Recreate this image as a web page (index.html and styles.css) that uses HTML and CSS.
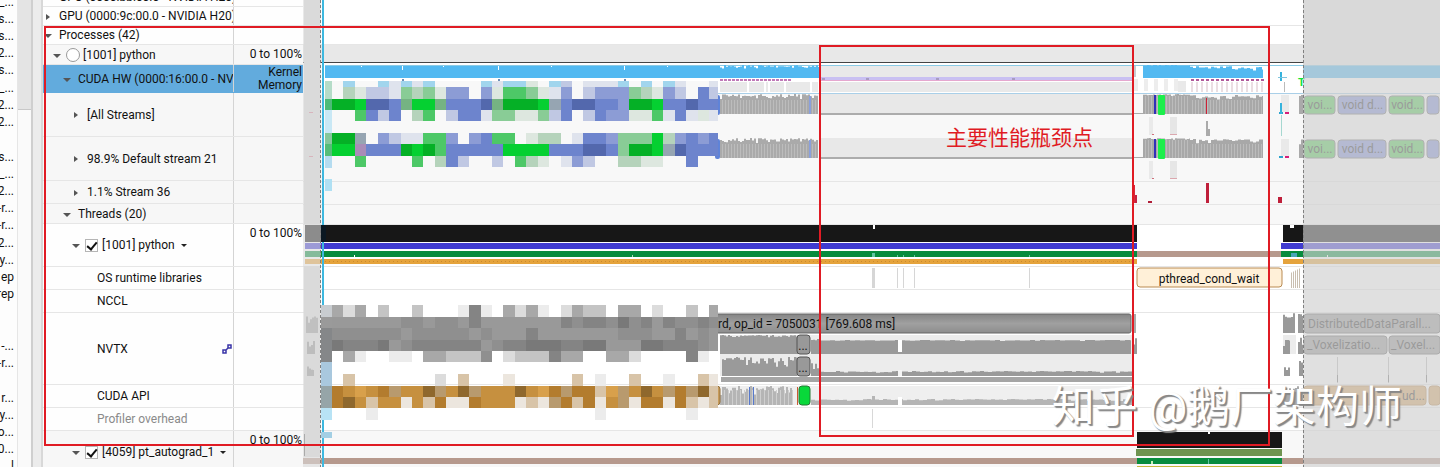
FILE: index.html
```html
<!DOCTYPE html>
<html lang="en">
<head>
<meta charset="utf-8">
<title>Profiler timeline</title>
<link rel="stylesheet" href="styles.css">
</head>
<body>
<main class="app">
  <aside class="files">
    <ul class="file-list">
      <li>_...</li><li>s...</li><li>s...</li><li>2...</li><li>s...</li><li>_...</li><li>2...</li><li>2...</li><li></li>
      <li>s...</li><li>_...</li><li>2...</li><li>-r...</li><li>-r...</li><li>2...</li><li>y...</li><li>ep</li><li>rep</li>
      <li></li><li></li><li>-...</li><li>-r...</li><li></li><li>r...</li><li>y...</li><li>o...</li><li>0...</li><li>l</li>
    </ul>
    <div class="scrollbar"><div class="thumb"></div></div>
    <div class="splitter"></div>
  </aside>

  <section class="tree">
    <div class="row row-cut"><div class="name l0"><button class="tw shut" aria-label="Expand"></button><span>GPU (0000:bb:00.0 - NVIDIA H20)</span></div><div class="scale"></div></div>
    <div class="row row-s"><div class="name l0"><button class="tw shut" aria-label="Expand"></button><span>GPU (0000:9c:00.0 - NVIDIA H20)</span></div><div class="scale"></div></div>
    <div class="row row-s"><div class="name l0"><button class="tw" aria-label="Collapse"></button><span>Processes (42)</span></div><div class="scale"></div></div>
    <div class="row row-p alt"><div class="name l1"><button class="tw" aria-label="Collapse"></button><input class="dot" type="radio" id="p1001"><label for="p1001">[1001] python</label></div><div class="scale mid">0 to 100%</div></div>
    <div class="row row-c picked"><div class="name l2"><button class="tw" aria-label="Collapse"></button><span>CUDA HW (0000:16:00.0 - NVIDIA)</span></div><div class="scale mid">Kernel<br>Memory</div></div>
    <div class="row row-l alt"><div class="name l3"><button class="tw shut" aria-label="Expand"></button><span>[All Streams]</span></div><div class="scale"></div></div>
    <div class="row row-l alt"><div class="name l3"><button class="tw shut" aria-label="Expand"></button><span>98.9% Default stream 21</span></div><div class="scale"></div></div>
    <div class="row row-m alt"><div class="name l3"><button class="tw shut" aria-label="Expand"></button><span>1.1% Stream 36</span></div><div class="scale"></div></div>
    <div class="row row-p alt"><div class="name l2"><button class="tw" aria-label="Collapse"></button><span>Threads (20)</span></div><div class="scale"></div></div>
    <div class="row row-t"><div class="name l3"><button class="tw" aria-label="Collapse"></button><input class="tick" type="checkbox" id="t1001" checked><label for="t1001">[1001] python</label><button class="drop" aria-label="Menu"></button></div><div class="scale">0 to 100%</div></div>
    <div class="row row-m"><div class="name l4"><span>OS runtime libraries</span></div><div class="scale"></div></div>
    <div class="row row-m"><div class="name l4"><span>NCCL</span></div><div class="scale"></div></div>
    <div class="row row-n"><div class="name l4"><span>NVTX</span>
      <svg class="link" width="10" height="10" viewBox="0 0 10 10"><path d="M1 6h3v3H1zM6 1h3v3H6zM4 6l2-2" fill="none" stroke="#3a35a8" stroke-width="1.5"/></svg></div><div class="scale"></div></div>
    <div class="row row-m"><div class="name l4"><span>CUDA API</span></div><div class="scale"></div></div>
    <div class="row row-m"><div class="name l4 faint"><span>Profiler overhead</span></div><div class="scale"></div></div>
    <div class="row row-t alt"><div class="name l3"><button class="tw" aria-label="Collapse"></button><input class="tick" type="checkbox" id="t4059" checked><label for="t4059">[4059] pt_autograd_1</label><button class="drop" aria-label="Menu"></button></div><div class="scale">0 to 100%</div></div>
  </section>

  <svg class="timeline" id="timeline" viewBox="303 0 1137 467" preserveAspectRatio="xMinYMin slice"></svg>

  <div class="frame"></div>
  <div class="watermark">知乎 @鹅厂架构师</div>
</main>
<script src="timeline.js"></script>
</body>
</html>
```

FILE: styles.css
```css
* { box-sizing: border-box; }
body {
  margin: 0;
  background: #fff;
  color: #111;
  font: 12px/14px Roboto, "Noto Sans CJK SC", sans-serif;
}
.app { position: relative; display: flex; height: 100vh; overflow: hidden; }

.files { display: flex; flex: none; width: 43px; overflow: hidden; background: #fdfdfd; }
.file-list {
  display: grid;
  grid-auto-rows: 1fr;
  flex: none;
  width: 18px;
  height: calc(100% + 15px);
  margin: -7px 0 0;
  padding: 0 3px 0 0;
  list-style: none;
  border-right: 1px solid #e6e6e6;
}
.file-list li { display: flex; justify-content: flex-end; align-items: center; min-width: 0; white-space: nowrap; }
.scrollbar { width: 13px; background: #fafafa; }
.thumb { height: 110px; background: #e4e4e4; border-bottom: 1px solid #c8c8c8; }
.splitter { flex: 1; background: #ececec; border-left: 2px solid #cfcfcf; border-right: 2px solid #d8d8d8; }

.tree { flex: none; width: 260px; background: #fff; }
.row { display: flex; border-bottom: 1px solid #e6e6e6; background: #fefefe; }
.row.alt { background: #f7f7f7; }
.row.picked { background: #62abdd; border-color: #62abdd; }
.row-cut { height: 20px; margin-top: -13px; }
.row-s { height: 19px; }
.row-p { height: 20px; }
.row-m { height: 23px; }
.row-c { height: 28px; }
.row-t { height: 43px; }
.row-l { height: 44px; }
.row-n { height: 72px; }
.name {
  display: flex;
  align-items: center;
  width: 191px;
  overflow: hidden;
  white-space: nowrap;
  border-right: 1px solid #d4d4d4;
}
.l0 { padding-left: 1px; }
.l1 { padding-left: 10px; }
.l2 { padding-left: 20px; }
.l3 { padding-left: 29px; }
.l4 { padding-left: 54px; }
.faint { color: #8a8a8a; }
.scale { flex: 1; padding: 3px 1px 0 0; text-align: right; line-height: 13px; }
.scale.mid { align-self: center; padding-top: 0; }

button { padding: 0; border: 0; background: none; }
.tw { position: relative; flex: none; width: 8px; height: 8px; margin-right: 7px; }
.tw::before { content: ""; display: block; margin-top: 2px; border: 4px solid transparent; border-top-color: #555; border-bottom: 0; }
.tw.shut::before { width: 4px; margin: 1px 0 0 2px; border: 3px solid transparent; border-left: 4px solid #555; border-right: 0; }
.dot { appearance: none; flex: none; width: 14px; height: 14px; margin: 0 3px 0 -2px; border: 1px solid #999; border-radius: 50%; background: #fff; }
.tick { appearance: none; flex: none; display: grid; place-items: center; width: 13px; height: 13px; margin: 0 4px 0 -2px; border: 1px solid #b5b5b5; background: #fff; }
.tick::before { content: ""; width: 4px; height: 8px; border: solid #111; border-width: 0 2px 2px 0; transform: rotate(40deg); }
.drop { margin-left: 6px; border: 3px solid transparent; border-top-color: #222; border-bottom: 0; }
.link { margin-left: auto; margin-right: 1px; }

.timeline { flex: 1; min-width: 0; height: 467px; font-family: Roboto, "Noto Sans CJK SC", sans-serif; }
.frame { position: absolute; left: 44px; right: 170px; top: 26px; height: 420px; border: 2px solid #e01b24; }
.watermark {
  position: absolute;
  right: 38px;
  top: 380px;
  color: #fff;
  font-size: 43px;
  line-height: 54px;
  text-shadow: 2px 2px 1px #888, 1px 1px 1px #999;
  white-space: nowrap;
}
```

FILE: timeline.js
```js
const svg = document.getElementById("timeline");
const out = [];
const rect = (x1, y1, x2, y2, fill, extra = "") =>
  out.push(`<rect x="${x1}" y="${y1}" width="${x2 - x1}" height="${y2 - y1}" fill="${fill}" ${extra}/>`);
const text = (x, y, s, fill = "#222", size = 12, extra = "") =>
  out.push(`<text x="${x}" y="${y}" fill="${fill}" font-size="${size}" ${extra}>${s}</text>`);
const noise = n => { const v = Math.sin(n * 12.9898) * 43758.5453; return v - Math.floor(v); };

// Column chart standing on `base`; heights vary between lo and hi.
function bars(x1, x2, base, lo, hi, fill, step = 2, solid = 0) {
  let d = `M${x1} ${base}`;
  for (let x = x1; x < x2; x += step) {
    const h = lo + (hi - lo) * Math.pow(noise(x + base), 0.5);
    d += `V${(base - h).toFixed(1)}h${Math.min(step, x2 - x)}`;
  }
  out.push(`<path d="${d}V${base}z" fill="${fill}"/>`);
  if (solid) for (let x = x1 + 2; x < x2; x += 3) rect(x, base - lo, x + 1, base, "#bcbcbc");
}

// Row backgrounds
rect(303, 0, 1440, 467, "#fff");
rect(303, 44, 1440, 62, "#e8e8e8");
rect(303, 94, 1440, 224, "#f8f8f8");
rect(303, 430, 1440, 467, "#f8f8f8");
[25, 44, 181, 204, 224, 266, 289, 312, 384, 407, 430].forEach(y => rect(303, y, 1440, y + 1, "#e6e6e6"));
rect(303, 62, 1440, 63, "#444");
rect(325, 65, 1440, 66, "#8acbe6");
rect(325, 93, 1440, 94, "#a9cfe8");

// CUDA HW row
rect(325, 66, 720, 78, "#52b9f1");
[361, 443, 551, 667].forEach(x => rect(x, 66, x + 1, 67, "#fff"));
[402, 498, 624].forEach(x => { rect(x, 66, x + 1, 70, "#fff"); rect(x, 79, x + 2, 81, "#6d8fb8"); });
bars(720, 819, 78, 9, 13, "#52b9f1");
for (let x = 720; x < 792; x += 4) rect(x, 79, x + 3, 81, "#c07ab8");
rect(720, 82, 818, 92, "#e9e9e9");
[747, 764, 768, 784, 810].forEach(x => rect(x, 82, x + 2, 92, "#fff"));
rect(820, 66, 1132, 77, "#e9e9e9");
rect(820, 77, 1132, 80, "#c9c0f2");
rect(820, 80, 1132, 81, "#e5a8cf");
rect(820, 82, 1132, 92, "#e9e9e9");
[822, 866, 936, 1012].forEach(x => rect(x, 78, x + 3, 80, "#a79cc2"));
bars(1143, 1190, 78, 12, 13, "#52b9f1");
bars(1190, 1263, 78, 7, 12, "#52b9f1", 3);
rect(1134, 66, 1136, 77, "#c7cbd2");
for (let x = 1134; x < 1175; x += 10) rect(x, 79, x + 4, 91, "#ededed");
for (let x = 1191; x < 1262; x += 5) { rect(x, 79, x + 3, 81, "#b05a9a"); rect(x, 82, x + 2, 92, "#eadfe2"); }
rect(1178, 81, 1186, 92, "#e9e9e9");
rect(1280, 72, 1282, 81, "#35b3dd");
rect(1278, 77, 1287, 78, "#7fc4de");
rect(1284, 82, 1285, 92, "#bbb");
text(1298, 86, "T", "#10e33c", 11, 'font-weight="700"');
rect(1303, 66, 1440, 78, "#52b9f1");

// Stream rows
for (const base of [114, 158]) {
  rect(820, base - 20, 1132, base - 1, "#e8e8e8");
  rect(820, base - 1, 1132, base + 1, "#acacac");
  bars(720, 818, base, 14, 20, "#aaaaaa", 2, 1);
  rect(809, base - 18, 811, base, "#8aa0dc");
  rect(715, base - 19, 720, base + 1, "#5f83d8", 'rx="2"');
  rect(1132, base - 1, 1144, base, "#aaa");
  bars(1143, 1190, base, 18, 20, "#a8a8a8", 2, 1);
  bars(1190, 1263, base, 14, 19, "#a8a8a8", 3, 1);
  rect(1154, base - 19, 1156, base, "#3030b8");
  rect(1158, base - 19, 1165, base + 1, "#1cef4c", 'rx="1"');
  rect(1149, base + 3, 1153, base + 21, "#eaeaea");
  rect(1170, base + 3, 1177, base + 21, "#e6e6e6");
  rect(1170, base + 20, 1177, base + 21, "#dba7ae");
  rect(1152, base + 20, 1154, base + 21, "#d0707c");
  rect(1281, base - 19, 1289, base - 2, "#e9e9e9");
  rect(1279, base - 2, 1283, base, "#2ba4cf");
  rect(1285, base - 2, 1289, base, "#d51f7a");
  bars(1299, 1303, base, 8, 19, "#aaa", 2);
  [[1304, 1336, "#55c658", "voi..."], [1338, 1387, "#8290d6", "void d..."], [1389, 1425, "#55c658", "void..."], [1427, 1440, "#8290d6", ""]].forEach(([a, b, c, s]) => {
    rect(a, base - 18, b - 1, base, c, 'rx="3" stroke="#777"');
    text((a + b) / 2, base - 5, s, "#333", 12, 'text-anchor="middle"');
  });
}
rect(1206, 98, 1207, 114, "#cc2036");
rect(1280, 103, 1282, 114, "#35b3dd");
rect(1206, 121, 1208, 136, "#aaa");
rect(1208, 129, 1210, 136, "#aaa");
rect(1281, 115, 1282, 136, "#a6d8d1");
rect(1133, 185, 1135, 203, "#d8283c");
rect(1135, 195, 1137, 203, "#c42440");
rect(1148, 201, 1152, 203, "#b01e38");
rect(1206, 183, 1209, 203, "#bf1f3a");
rect(1278, 197, 1282, 203, "#bf1f3a");

// Thread state rows
rect(305, 225, 1137, 242, "#171717");
rect(305, 243, 1137, 249, "#403bd0");
rect(305, 251, 1137, 257, "#078c3e");
rect(305, 259, 1137, 264, "#e5a33c");
for (let x = 325; x < 1137; x += 4) rect(x, 261, x + 1, 262, "#c98a2f");
rect(1137, 251, 1282, 257, "#b6998d");
rect(873, 225, 875, 229, "#fff");
rect(354, 255, 355, 257, "#fff");
rect(632, 255, 633, 257, "#a9e0bd");
[[872, 875], [897, 898], [903, 904], [914, 915], [1029, 1030]].forEach(([a, b], i) => {
  rect(a, i ? 255 : 253, b, 257, "#62c4a3");
  rect(a, 268, b, 288, "#d6d6d6");
});
rect(1283, 225, 1440, 242, "#171717");
rect(1281, 243, 1440, 249, "#403bd0");
rect(1281, 251, 1440, 257, "#078c3e");
rect(1283, 259, 1440, 264, "#e5a33c");
rect(1290, 225, 1294, 228, "#fff");
rect(1291, 253, 1297, 257, "#4ba6b8");
rect(1327, 255, 1328, 257, "#fff");
rect(1137, 268, 1282, 287, "#fff0d8", 'rx="3" stroke="#b98b52"');
text(1209, 283, "pthread_cond_wait", "#111", 12, 'text-anchor="middle"');
for (let x = 1291; x < 1300; x += 2) rect(x, 268 + (1300 - x) / 2, x + 1, 288, "#c9beb0");

// NVTX
out.push('<linearGradient id="bar" x2="0" y2="1"><stop offset="0" stop-color="#858585"/><stop offset=".5" stop-color="#a0a0a0"/><stop offset="1" stop-color="#8d8d8d"/></linearGradient>');
rect(720, 335, 1132, 376, "#ececec");
rect(700, 314, 1131, 333, "url(#bar)", 'rx="2" stroke="#666"');
text(718, 328, "rd, op_id = 7050031 [769.608 ms]", "#111");
bars(720, 798, 354, 16, 19, "#9a9a9a");
bars(811, 820, 354, 12, 15, "#9a9a9a");
bars(820, 1131, 354, 13, 14, "#9a9a9a", 5);
bars(722, 797, 376, 8, 19, "#9a9a9a");
bars(811, 819, 376, 4, 13, "#9a9a9a");
bars(820, 1132, 376, 3, 5, "#9a9a9a", 4);
rect(898, 340, 902, 352, "#fff");
rect(898, 370, 902, 376, "#f4f4f4");
rect(721, 377, 1132, 382, "#a5a5a5");
for (const y of [335, 357]) {
  rect(797, y, 810, y + 19, "#999", 'rx="3" stroke="#555"');
  text(803, y + 15, "...", "#111", 12, 'text-anchor="middle"');
}
rect(1132, 314, 1136, 333, "#aaa");
bars(1133, 1137, 354, 8, 17, "#999");
bars(1283, 1295, 333, 12, 20, "#9a9a9a");
bars(1298, 1303, 333, 12, 20, "#9a9a9a");
rect(1283, 335, 1296, 354, "#ececec");
bars(1283, 1290, 354, 2, 16, "#999");
bars(1298, 1303, 354, 8, 18, "#999");
bars(1284, 1290, 376, 1, 10, "#999");
bars(1299, 1303, 376, 3, 16, "#999");
rect(1304, 314, 1440, 333, "#999", 'rx="3" stroke="#666"');
rect(1304, 336, 1387, 354, "#999", 'rx="3" stroke="#666"');
rect(1389, 336, 1440, 354, "#999", 'rx="3" stroke="#666"');
text(1308, 328, "DistributedDataParall...", "#333");
text(1307, 349, "_Voxelizatio...", "#333");
text(1391, 349, "_Voxel...", "#333");
[1337, 1388, 1426].forEach(x => { rect(x, 357, x + 1, 383, "#bbb"); rect(x, 375, x + 1, 382, "#777"); });

// CUDA API
rect(720, 386, 1132, 405, "#efefef");
bars(720, 793, 405, 8, 19, "#b5b5b5");
for (let x = 724; x < 793; x += 4) rect(x, 390, x + 1, 405, "#cfcfcf");
[749, 753].forEach(x => rect(x, 387, x + 1, 405, "#5779cc"));
bars(811, 1132, 405, 4, 6, "#b5b5b5", 4);
rect(898, 397, 902, 405, "#fff");
rect(872, 396, 875, 405, "#b5b5b5");
rect(797, 387, 798, 405, "#c85b33");
rect(799, 386, 810, 405, "#08d83a", 'rx="3" stroke="#277a37"');
rect(700, 386, 720, 405, "#c79b5b", 'rx="3" stroke="#93713d"');
rect(872, 409, 873, 428, "#d8d8d8");
bars(1283, 1303, 405, 5, 19, "#aaa");
rect(1304, 386, 1426, 405, "#d7a86a", 'rx="3" stroke="#b98b52"');
rect(1429, 386, 1440, 405, "#d7a86a", 'rx="3" stroke="#b98b52"');
text(1402, 400, "ud...", "#333");

// Second thread
rect(303, 458, 1440, 464, "#b6998d");
rect(1137, 432, 1282, 448, "#171717");
rect(1136, 449, 1282, 456, "#6e9350");
rect(1137, 458, 1282, 464, "#078c3e");
rect(1137, 466, 1282, 467, "#c9b73c");
rect(1208, 432, 1210, 434, "#fff");
rect(1151, 461, 1153, 464, "#c9f0b8");
rect(1208, 459, 1209, 464, "#62c4a3");

// Time before and after the selected range
rect(303, 0, 321, 467, "#dadada", 'opacity=".6"');
rect(304, 0, 320, 224, "#dadada");
rect(304, 266, 320, 457, "#dadada");
bars(306, 318, 333, 6, 18, "#c0c0c0");
bars(307, 315, 354, 3, 14, "#bdbdbd");
bars(307, 314, 376, 1, 10, "#bdbdbd");
rect(304, 434, 305, 456, "#aaa");
[112, 156].forEach(y => rect(309, y, 313, y + 1, "#d8b4bc"));
rect(1303, 0, 1440, 467, "#d0d0d0", 'opacity=".66"');
rect(1303, 0, 1440, 65, "#d9d9d9");
[320, 1303].forEach(x => out.push(`<path d="M${x}.5 0V467" stroke="#808080" stroke-dasharray="3 2"/>`));
rect(322, 0, 324, 467, "#3eb8df");
rect(321, 225, 326, 242, "#0b1822");

// Pixelated blocks
const tone = {
  a: "#a1d5ed", e: "#dfe3ed", w: "#dde7df", g: "#89cc96", G: "#4dc867", D: "#05b026", B: "#05d031",
  b: "#8c9cd5", c: "#c0c8e3", M: "#6d84cd", N: "#5368ad", l: "#b5d3bb", x: "#75b383", h: "#96a5b2", p: "#a98cb8",
  1: "#ececec", 2: "#dcdcdc", 3: "#c4c4c4", 4: "#a8a8a8", 5: "#999999", 6: "#8f8f8f", 7: "#848484", 8: "#797979",
  q: "#c6903f", r: "#b37c2e", s: "#8f682d", t: "#d8a04b", u: "#d8c4a8", v: "#ece6de", z: "#b89a6e"
};
const mosaic = [
  [81, 87, ".a..aeaea....aeaaw.ac.eeea.a.ae..e"],
  [87, 99, ".lwcceglgwbb.bwGGgweb.cbbbglwbc.Mc"],
  [99, 110, "DDBNNMxBBxMMMNxDDDBhMNNMMbDDBMMNMM"],
  [110, 121, "..GMcM.lG.cMMeggwwgcM.cMbbwwGeMewe"],
  [133, 144, "DDh.bceeGGb.bMGG.wll.eMMbgggBlbMbM"],
  [144, 156, "BBpMMMDBDGMMMMMBBBBMMMNNMgDDBhNMMM"],
  [156, 167, "..G....G.lMc..c.Glw.ebc..llww..M.."],
  [305, 317, "424.3..3...171.4241.2433.44.2..3.4"],
  [317, 328, "5555556656657555555576776867576676"],
  [328, 340, "6666665666665655575555555666557565"],
  [340, 351, "8777856777777567788877885558877765"],
  [351, 362, ".41..11.443336.2333744..442....71."],
  [374, 386, ".u.......2.u...v.....u.1..u..1..uv"],
  [386, 397, "rqtqrzqqszqszqqqsqtrzrrutzqsqzrzsu"],
  [397, 408, "rsquqqvqurvvrqqqvuvzrurvqzvrrvruvu"],
  [408, 420, "...1...................1.......1.."]
];
rect(326, 81, 717, 95, "#f8f8f8");
rect(332, 305, 718, 383, "#fff");
rect(332, 385, 718, 406, "#fff");
const cellX = k => Math.min(Math.round(332 + 11.43 * k), 718);
for (const [y1, y2, cells] of mosaic)
  [...cells].forEach((c, k) => { if (tone[c]) rect(cellX(k), y1, cellX(k + 1), y2, tone[c]); });
[[325, 81, 99, "#b5dcc8"], [325, 99, 110, "#4dbb78"], [325, 110, 133, "#c9e8f5"], [325, 133, 144, "#85c79b"],
 [325, 144, 156, "#55bd78"], [325, 156, 168, "#b5dcf0"], [325, 179, 191, "#b0e0f3"],
 [321, 305, 317, "#c8ccd0"], [321, 317, 328, "#9a9a9a"], [321, 328, 362, "#858789"], [321, 362, 386, "#a9c8de"],
 [321, 386, 408, "#96a5a8"], [321, 408, 420, "#b8e3f5"], [321, 432, 438, "#a3cfe4"]
].forEach(([x, y1, y2, c]) => rect(x, y1, 332, y2, c));

// Marked bottleneck
rect(820, 46, 1133, 436, "none", 'stroke="#e01b24" stroke-width="2"');
text(946, 145, "主要性能瓶颈点", "#e01b24", 21);

svg.innerHTML = out.join("");
```
